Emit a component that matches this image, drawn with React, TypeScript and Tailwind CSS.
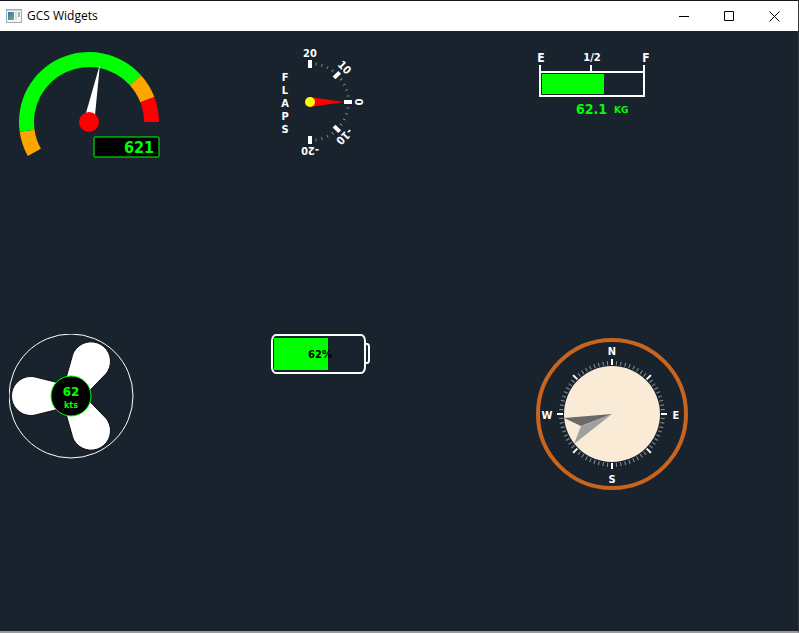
import type { ReactNode } from "react";

const labelFont =
  "[font-family:'DejaVu_Sans_Condensed','DejaVu_Sans',Tahoma,sans-serif] font-bold";
const wideFont = "[font-family:'DejaVu_Sans',Verdana,sans-serif] font-bold";

function polar(radius: number, degrees: number) {
  const a = (degrees * Math.PI) / 180;
  return `${(radius * Math.cos(a)).toFixed(2)} ${(radius * Math.sin(a)).toFixed(2)}`;
}

function band(inner: number, outer: number, from: number, to: number) {
  const large = to - from > 180 ? 1 : 0;
  return `M${polar(outer, from)} A${outer} ${outer} 0 ${large} 1 ${polar(outer, to)} L${polar(inner, to)} A${inner} ${inner} 0 ${large} 0 ${polar(inner, from)} Z`;
}

function CaptionButton({ label, children }: { label: string; children: ReactNode }) {
  return (
    <button type="button" aria-label={label} className="flex h-full w-[45px] items-center justify-center hover:bg-gray-200">
      <svg width="11" height="11" viewBox="0 0 11 11" fill="none" stroke="#000" aria-hidden="true">
        {children}
      </svg>
    </button>
  );
}

function TitleBar() {
  return (
    <header className="flex h-[31px] shrink-0 items-center border-t border-[#17171c] bg-white pr-px pl-1.5">
      <svg width="16" height="14" viewBox="0 0 16 14" aria-hidden="true">
        <defs>
          <linearGradient id="pane" x1="0" y1="0" x2="1" y2="1">
            <stop offset="0" stopColor="#3c6ea8" />
            <stop offset="1" stopColor="#5fb58a" />
          </linearGradient>
        </defs>
        <rect x="0.5" y="0.5" width="15" height="13" fill="#f4f5f7" stroke="#a3a9b0" />
        <rect x="1" y="1" width="14" height="1" fill="#cdd3da" />
        <rect x="2" y="3" width="6" height="8" fill="url(#pane)" />
        <rect x="9" y="3" width="2" height="8" fill="#d9dde1" />
        <rect x="12" y="3" width="2" height="5" fill="#8fc0b0" />
      </svg>
      <h1 className="ml-[5px] grow text-xs text-black [font-family:'Open_Sans','Noto_Sans',sans-serif]">GCS Widgets</h1>
      <CaptionButton label="Minimize">
        <path d="M0 5.5H10" />
      </CaptionButton>
      <CaptionButton label="Maximize">
        <path d="M0.5 0.5H9.5V9.5H0.5Z" />
      </CaptionButton>
      <CaptionButton label="Close">
        <path d="M0.5 0.5L10.5 10.5M10.5 0.5L0.5 10.5" />
      </CaptionButton>
    </header>
  );
}

function RpmGauge() {
  return (
    <svg width="160" height="120" viewBox="-80 -82 160 120" role="img" aria-label="Gauge 621">
      <path d={band(55, 70, 151, 172)} fill="#ffa500" />
      <path d={band(55, 70, 172, 318)} fill="#00ff00" />
      <path d={band(55, 70, 318, 339)} fill="#ffa500" />
      <path d={band(55, 70, 339, 360)} fill="#ff0000" />
      <path d="M11 -58L6 -7L-3 -9Z" fill="#fff" />
      <circle r="10" fill="#ff0000" />
      <rect x="5" y="15" width="65" height="20" rx="1" fill="#000" stroke="#00ff00" />
      <text x="65" y="31" textAnchor="end" fill="#00ff00" className={`text-[16px] ${labelFont}`}>621</text>
    </svg>
  );
}

function FlapsGauge() {
  const labels = ["20", "10", "0", "-10", "-20"];
  return (
    <svg width="100" height="126" viewBox="-39 -62 100 126" role="img" aria-label="Flaps 0">
      {"FLAPS".split("").map((letter, i) => (
        <text key={letter} x="-25" y={-21 + i * 13} textAnchor="middle" fill="#fff" className={`text-[11px] ${labelFont}`}>{letter}</text>
      ))}
      {Array.from({ length: 21 }, (_, i) =>
        i % 5 === 0 ? (
          <g key={i} transform={`rotate(${i * 9})`}>
            <rect x="-2" y="-42" width="4" height="8" fill="#fff" />
            <text y="-45" textAnchor="middle" fill="#fff" className={`text-[11px] ${labelFont}`}>{labels[i / 5]}</text>
          </g>
        ) : (
          <path key={i} d="M0 -40V-37" stroke="#80868c" transform={`rotate(${i * 9})`} />
        ),
      )}
      <path d="M0 -5L34 0L0 5Z" fill="#ff0000" />
      <circle r="5" fill="#ffff00" />
    </svg>
  );
}

function FuelGauge() {
  return (
    <svg width="125" height="80" viewBox="0 0 125 80" role="img" aria-label="Fuel 62.1 KG">
      <path d="M7 25V56H111V25M7 32H111M58 25V32" fill="none" stroke="#fff" strokeWidth="2" />
      <rect x="9" y="34" width="62" height="20" fill="#00ff00" />
      <text x="8" y="22" textAnchor="middle" fill="#fff" className={`text-[12px] ${labelFont}`}>E</text>
      <text x="59" y="21" textAnchor="middle" fill="#fff" className={`text-[10px] ${wideFont}`}>1/2</text>
      <text x="113" y="22" textAnchor="middle" fill="#fff" className={`text-[12px] ${labelFont}`}>F</text>
      <text x="43" y="74" fill="#00ff00" className={`text-[14px] ${labelFont}`}>62.1</text>
      <text x="81" y="73" fill="#00ff00" className={`text-[9px] ${wideFont}`}>KG</text>
    </svg>
  );
}

function Airspeed() {
  return (
    <svg width="126" height="126" viewBox="-62 -62 126 126" role="img" aria-label="Airspeed 62 kts">
      <circle r="62" fill="none" stroke="#fff" />
      {[0, 120, 240].map((angle) => (
        <path
          key={angle}
          d="M-12 -13L-36 -19A19 19 0 0 0 -40 -19.5A19.5 19.5 0 0 0 -40 19.5A19 19 0 0 0 -36 19L-12 13Z"
          fill="#fff"
          stroke="#000"
          strokeWidth="0.8"
          transform={`rotate(${angle})`}
        />
      ))}
      <circle r="20" fill="#000" stroke="#00ff00" />
      <text y="0" textAnchor="middle" fill="#00ff00" className={`text-[12px] ${wideFont}`}>62</text>
      <text y="12" textAnchor="middle" fill="#00ff00" className={`text-[9px] ${labelFont}`}>kts</text>
    </svg>
  );
}

function Battery() {
  return (
    <svg width="100" height="40" viewBox="0 0 100 40" role="img" aria-label="Battery 62%">
      <rect x="3" y="4" width="54" height="32" fill="#00ff00" />
      <g fill="none" stroke="#fff" strokeWidth="2">
        <rect x="1" y="1" width="93" height="38" rx="4" ry="6" />
        <path d="M94 10H96Q98 10 98 13V26Q98 29 96 29H94" />
      </g>
      <text x="49" y="24" textAnchor="middle" fill="#000" className={`text-[10px] ${wideFont}`}>62%</text>
    </svg>
  );
}

function Compass() {
  return (
    <svg width="157" height="158" viewBox="-79 -80 157 158" role="img" aria-label="Wind direction">
      <circle r="74" fill="none" stroke="#c8641e" strokeWidth="4" />
      {Array.from({ length: 72 }, (_, i) =>
        i % 9 === 0 ? (
          <path key={i} d="M0 -55V-49" stroke="#fff" strokeWidth="2" transform={`rotate(${i * 5})`} />
        ) : (
          <path key={i} d="M0 -53V-49" stroke="#8c9298" transform={`rotate(${i * 5})`} />
        ),
      )}
      <circle r="48" fill="#faebd7" />
      <path d="M0 0L-48 4L-31 12Z" fill="#696969" />
      <path d="M0 0L-31 12L-38 30Z" fill="#a0a0a0" />
      <g fill="#fff" textAnchor="middle" className={`text-[11px] ${labelFont}`}>
        <text x="0" y="-59">N</text>
        <text x="64" y="5">E</text>
        <text x="0" y="69">S</text>
        <text x="-65" y="5">W</text>
      </g>
    </svg>
  );
}

export default function App() {
  return (
    <div className="flex min-h-screen flex-col border-r border-b-2 border-r-[#3a3a3e] border-b-[#9a9a9c] bg-[#19232d]">
      <TitleBar />
      <main className="grid grow grid-cols-3 grid-rows-2 items-start gap-1.5 p-[9px]">
        <RpmGauge />
        <FlapsGauge />
        <FuelGauge />
        <Airspeed />
        <Battery />
        <Compass />
      </main>
    </div>
  );
}
